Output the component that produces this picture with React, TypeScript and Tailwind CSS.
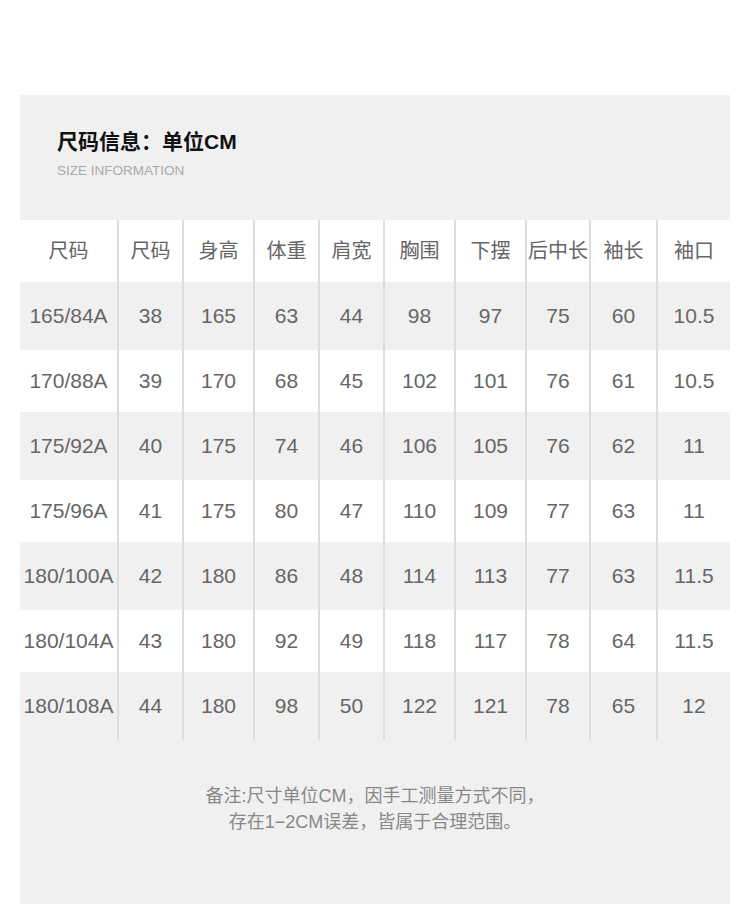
const headers = ['尺码', '尺码', '身高', '体重', '肩宽', '胸围', '下摆', '后中长', '袖长', '袖口']

const rows = [
  ['165/84A', '38', '165', '63', '44', '98', '97', '75', '60', '10.5'],
  ['170/88A', '39', '170', '68', '45', '102', '101', '76', '61', '10.5'],
  ['175/92A', '40', '175', '74', '46', '106', '105', '76', '62', '11'],
  ['175/96A', '41', '175', '80', '47', '110', '109', '77', '63', '11'],
  ['180/100A', '42', '180', '86', '48', '114', '113', '77', '63', '11.5'],
  ['180/104A', '43', '180', '92', '49', '118', '117', '78', '64', '11.5'],
  ['180/108A', '44', '180', '98', '50', '122', '121', '78', '65', '12'],
]

const gridCols = 'grid grid-cols-[99px_65px_71px_65px_65px_71px_71px_64px_67px_72px]'

function Cell({ children, last }: { children: React.ReactNode; last: boolean }) {
  return (
    <div
      className={`flex items-center justify-center whitespace-nowrap ${last ? '' : 'border-r-2 border-[#dddddd]'}`}
    >
      {children}
    </div>
  )
}

export default function App() {
  return (
    <div
      className="w-[750px] h-[904px] bg-white px-[20px] pt-[95px] overflow-hidden"
      style={{ fontFamily: '"Liberation Sans", "Noto Sans CJK SC", sans-serif' }}
    >
      <div className="h-[809px] bg-[#f0f0f0]">
        <div className="h-[125px] pl-[37px] pt-[33px]">
          <h1 className="text-[21px] font-bold leading-[28px] text-[#111]">尺码信息：单位CM</h1>
          <p className="mt-[7px] text-[13.5px] leading-[16px] text-[#aaaaaa]">SIZE INFORMATION</p>
        </div>

        <div className="text-[#666666]">
          <div className={`${gridCols} h-[62px] bg-white text-[20px]`}>
            {headers.map((h, i) => (
              <Cell key={i} last={i === headers.length - 1}>
                {h}
              </Cell>
            ))}
          </div>
          {rows.map((row, r) => (
            <div
              key={r}
              className={`${gridCols} text-[21px] ${r % 2 === 0 ? 'h-[68px] bg-[#f0f0f0]' : 'h-[62px] bg-white'}`}
            >
              {row.map((v, i) => (
                <Cell key={i} last={i === row.length - 1}>
                  {v}
                </Cell>
              ))}
            </div>
          ))}
        </div>

        <div className="mt-[43px] text-center text-[18px] leading-[26px] text-[#888888]">
          <p>备注:尺寸单位CM，因手工测量方式不同，</p>
          <p>存在1−2CM误差，皆属于合理范围。</p>
        </div>
      </div>
    </div>
  )
}
